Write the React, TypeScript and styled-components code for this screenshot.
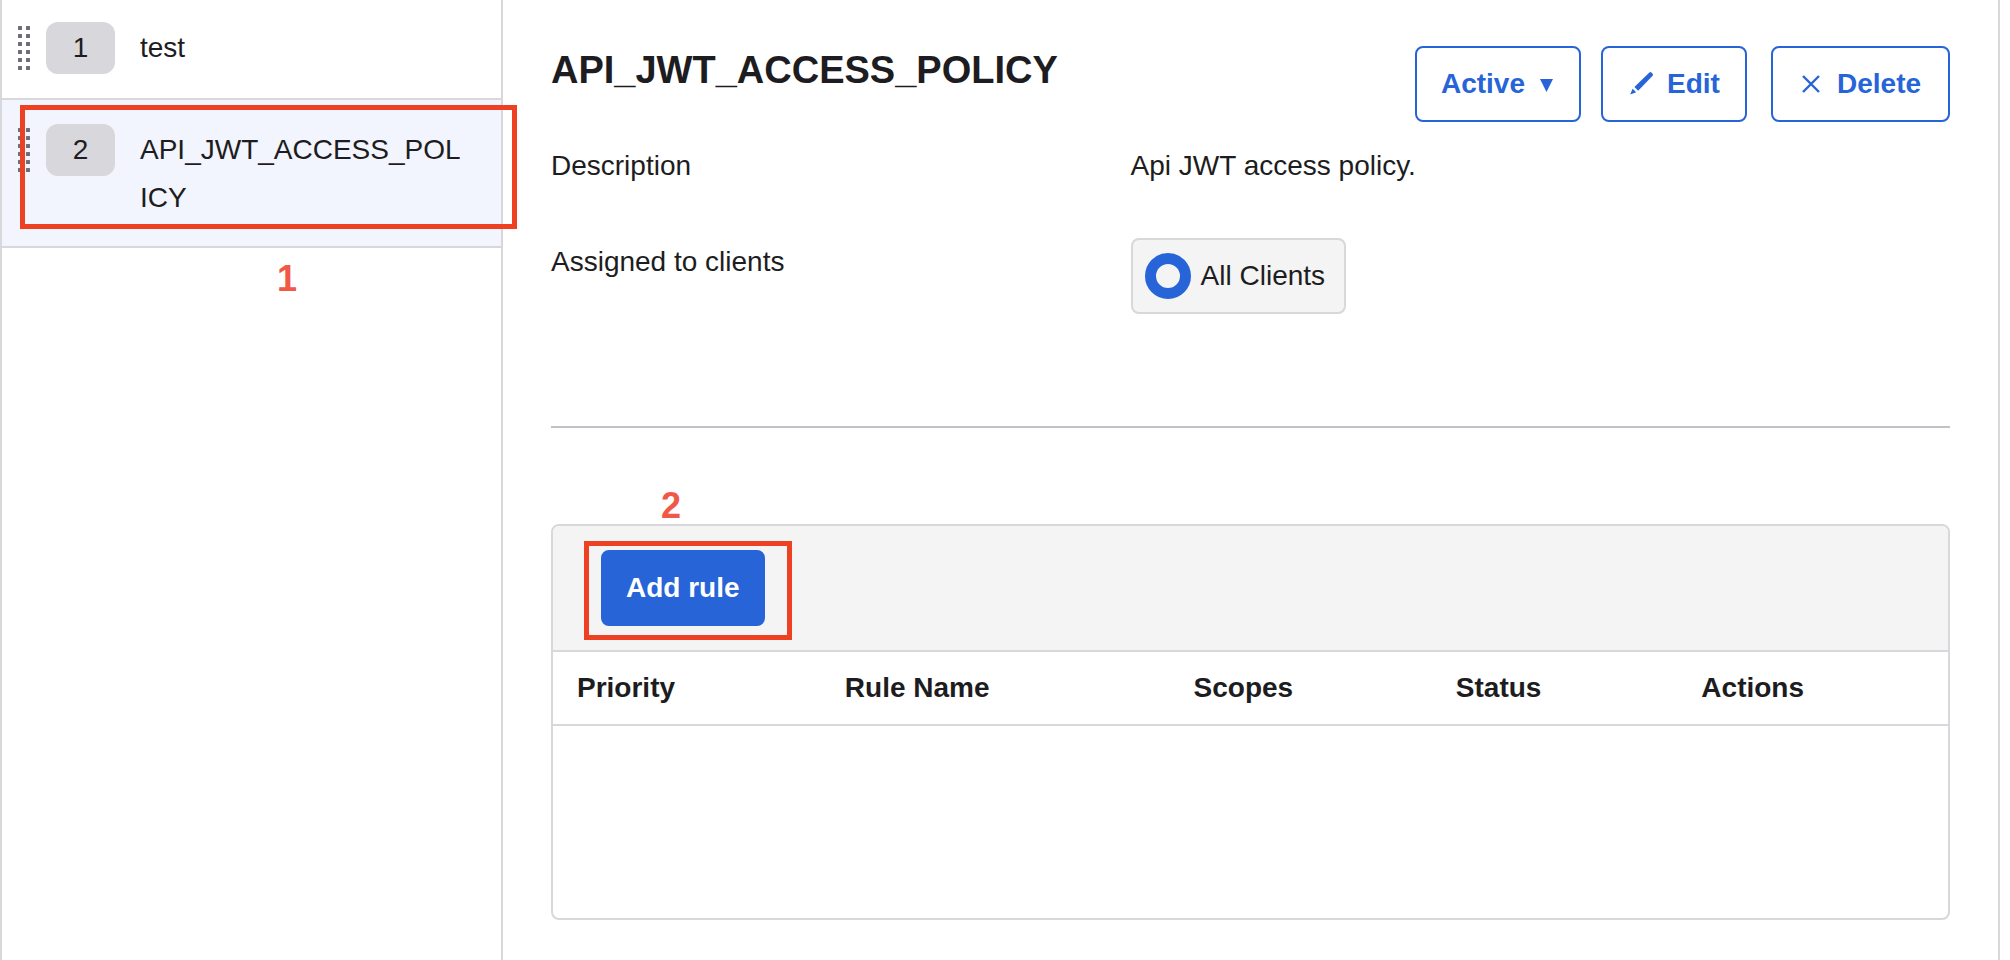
import React from "react";
import styled, { createGlobalStyle } from "styled-components";

const color = {
  ink: "#1d1d21",
  line: "#d7d7dc",
  rule: "#c1c1c8",
  panel: "#f4f4f4",
  selected: "#f2f4fe",
  blue: "#2664d8",
  mark: "#ee4023",
  markText: "#f05848",
};

const GlobalStyle = createGlobalStyle`
  *, *::before, *::after { box-sizing: border-box; }
  body {
    margin: 0;
    background: #fff;
    color: ${color.ink};
    font-family: "Liberation Sans", Arial, sans-serif;
    font-size: 28px;
    line-height: 48px;
  }
`;

const Page = styled.div`
  display: flex;
  min-height: 100vh;
  margin-right: 10px;
  border-left: 2px solid ${color.line};
  border-right: 2px solid ${color.line};
`;

const Sidebar = styled.nav`
  flex: 0 0 501px;
  border-right: 2px solid ${color.line};
`;

const PolicyList = styled.ol`
  list-style: none;
  margin: 0;
  padding: 0;
`;

const PolicyItem = styled.li<{ $selected?: boolean }>`
  position: relative;
  display: flex;
  align-items: flex-start;
  padding: 22px 36px 24px 16px;
  border-bottom: 2px solid ${color.line};
  background: ${(p) => (p.$selected ? color.selected : "transparent")};

  & + & {
    padding-top: 24px;
  }
`;

const Grip = styled.svg`
  flex: none;
  width: 12px;
  height: 44px;
  margin: 4px 16px 0 0;
  fill: #6e6e78;
`;

const Order = styled.span`
  flex: none;
  width: 69px;
  height: 52px;
  margin-right: 25px;
  padding: 2px 0;
  border-radius: 12px;
  background: ${color.line};
  text-align: center;
`;

const PolicyLink = styled.a`
  flex: 1;
  min-width: 0;
  padding-top: 2px;
  color: inherit;
  text-decoration: none;
  overflow-wrap: anywhere;
`;

const Mark = styled.div`
  position: absolute;
  border: 5px solid ${color.mark};
  pointer-events: none;
`;

const PolicyMark = styled(Mark)`
  top: 5px;
  bottom: 17px;
  left: 18px;
  right: -16px;
`;

const ButtonMark = styled(Mark)`
  inset: -9px -27px -14px -17px;
`;

const Step = styled.span`
  position: absolute;
  color: ${color.markText};
  font-size: 36px;
  font-weight: 700;
  line-height: 40px;
`;

const PolicyStep = styled(Step)`
  top: 159px;
  left: 275px;
`;

const ButtonStep = styled(Step)`
  top: -64px;
  left: 60px;
`;

const Main = styled.main`
  flex: 1;
  min-width: 0;
  padding: 46px 48px 40px;
`;

const Header = styled.header`
  display: flex;
  justify-content: space-between;
  align-items: flex-start;
`;

const Title = styled.h1`
  margin: 0;
  font-size: 38px;
  line-height: 48px;
`;

const Actions = styled.div`
  display: flex;
  gap: 24px;
`;

const ActionGroup = styled.div`
  display: flex;
  gap: 20px;
`;

const Button = styled.button<{ $primary?: boolean; $minWidth?: number }>`
  display: flex;
  align-items: center;
  gap: 12px;
  height: 76px;
  min-width: ${(p) => p.$minWidth ?? 0}px;
  padding: 0 ${(p) => (p.$primary ? 23 : 24)}px;
  border: 2px solid ${color.blue};
  border-radius: 8px;
  background: ${(p) => (p.$primary ? color.blue : "#fff")};
  color: ${(p) => (p.$primary ? "#fff" : color.blue)};
  font: inherit;
  font-weight: 700;
  white-space: nowrap;
  cursor: pointer;
`;

const Icon = styled.svg`
  flex: none;
  width: 28px;
  height: 28px;
`;

const Caret = styled.svg`
  flex: none;
  width: 18px;
  height: 16px;
  fill: currentColor;
`;

const Fields = styled.dl`
  display: grid;
  grid-template-columns: 29fr 41fr;
  row-gap: 48px;
  margin: 20px 0 0;
`;

const Term = styled.dt``;

const Value = styled.dd`
  margin: 0;
`;

const Chip = styled.span`
  display: inline-flex;
  align-items: center;
  gap: 10px;
  height: 76px;
  min-width: 215px;
  padding: 0 12px;
  border: 2px solid ${color.line};
  border-radius: 8px;
  background: ${color.panel};
  vertical-align: top;
`;

const Ring = styled.span`
  width: 46px;
  height: 46px;
  border: 11px solid ${color.blue};
  border-radius: 50%;
`;

const Divider = styled.hr`
  height: 2px;
  margin: 112px 0 96px;
  border: 0;
  background: ${color.rule};
`;

const Rules = styled.section`
  border: 2px solid ${color.line};
  border-radius: 8px;
`;

const Toolbar = styled.div`
  display: flex;
  padding: 24px 48px;
  border-bottom: 2px solid ${color.line};
  border-radius: 6px 6px 0 0;
  background: ${color.panel};
`;

const Anchor = styled.div`
  position: relative;
`;

const Table = styled.table`
  width: 100%;
  table-layout: fixed;
  border-spacing: 0;
`;

const HeadCell = styled.th<{ $share: number }>`
  width: ${(p) => p.$share}%;
  padding: 12px 24px;
  border-bottom: 2px solid ${color.line};
  text-align: left;
`;

const EmptyCell = styled.td`
  height: 192px;
  padding: 0;
`;

const dots = [0, 8, 16, 24, 32, 40];

const columns = [
  { name: "Priority", share: 19.2 },
  { name: "Rule Name", share: 25 },
  { name: "Scopes", share: 18.8 },
  { name: "Status", share: 17.6 },
  { name: "Actions", share: 19.4 },
];

function DragGrip() {
  return (
    <Grip viewBox="0 0 12 44" aria-hidden="true">
      {dots.map((y) => (
        <React.Fragment key={y}>
          <rect x="0" y={y} width="4" height="4" rx="0.5" />
          <rect x="8" y={y} width="4" height="4" rx="0.5" />
        </React.Fragment>
      ))}
    </Grip>
  );
}

export default function App() {
  return (
    <>
      <GlobalStyle />
      <Page>
        <Sidebar aria-label="Policies">
          <PolicyList>
            <PolicyItem>
              <DragGrip />
              <Order>1</Order>
              <PolicyLink href="#test">test</PolicyLink>
            </PolicyItem>
            <PolicyItem $selected>
              <DragGrip />
              <Order>2</Order>
              <PolicyLink href="#policy" aria-current="page">
                API_JWT_ACCESS_POLICY
              </PolicyLink>
              <PolicyMark />
              <PolicyStep>1</PolicyStep>
            </PolicyItem>
          </PolicyList>
        </Sidebar>
        <Main>
          <Header>
            <Title>API_JWT_ACCESS_POLICY</Title>
            <Actions>
              <ActionGroup>
                <Button type="button" aria-haspopup="menu" $minWidth={166}>
                  Active
                  <Caret viewBox="0 0 18 16" aria-hidden="true">
                    <path d="M3 3h13L9.500 16z" />
                  </Caret>
                </Button>
                <Button type="button" $minWidth={146}>
                  <Icon viewBox="0 0 28 28" aria-hidden="true" fill="currentColor">
                    <path d="M22.400 2.500q1-1 2 0l1.200 1.200q1 1 0 2L11.200 20.700 7.400 16.900z" />
                    <path d="M5.600 18.700l3.600 3.600-6 2.200z" />
                  </Icon>
                  Edit
                </Button>
              </ActionGroup>
              <Button type="button" $minWidth={179}>
                <Icon
                  viewBox="0 0 28 28"
                  aria-hidden="true"
                  fill="none"
                  stroke="currentColor"
                  strokeWidth="2.4"
                >
                  <path d="M6 6l16 16M22 6L6 22" />
                </Icon>
                Delete
              </Button>
            </Actions>
          </Header>
          <Fields>
            <Term>Description</Term>
            <Value>Api JWT access policy.</Value>
            <Term>Assigned to clients</Term>
            <Value>
              <Chip>
                <Ring />
                All Clients
              </Chip>
            </Value>
          </Fields>
          <Divider />
          <Rules aria-label="Rules">
            <Toolbar>
              <Anchor>
                <Button type="button" $primary>
                  Add rule
                </Button>
                <ButtonMark />
                <ButtonStep>2</ButtonStep>
              </Anchor>
            </Toolbar>
            <Table>
              <thead>
                <tr>
                  {columns.map(({ name, share }) => (
                    <HeadCell key={name} scope="col" $share={share}>
                      {name}
                    </HeadCell>
                  ))}
                </tr>
              </thead>
              <tbody>
                <tr>
                  <EmptyCell colSpan={columns.length} />
                </tr>
              </tbody>
            </Table>
          </Rules>
        </Main>
      </Page>
    </>
  );
}
